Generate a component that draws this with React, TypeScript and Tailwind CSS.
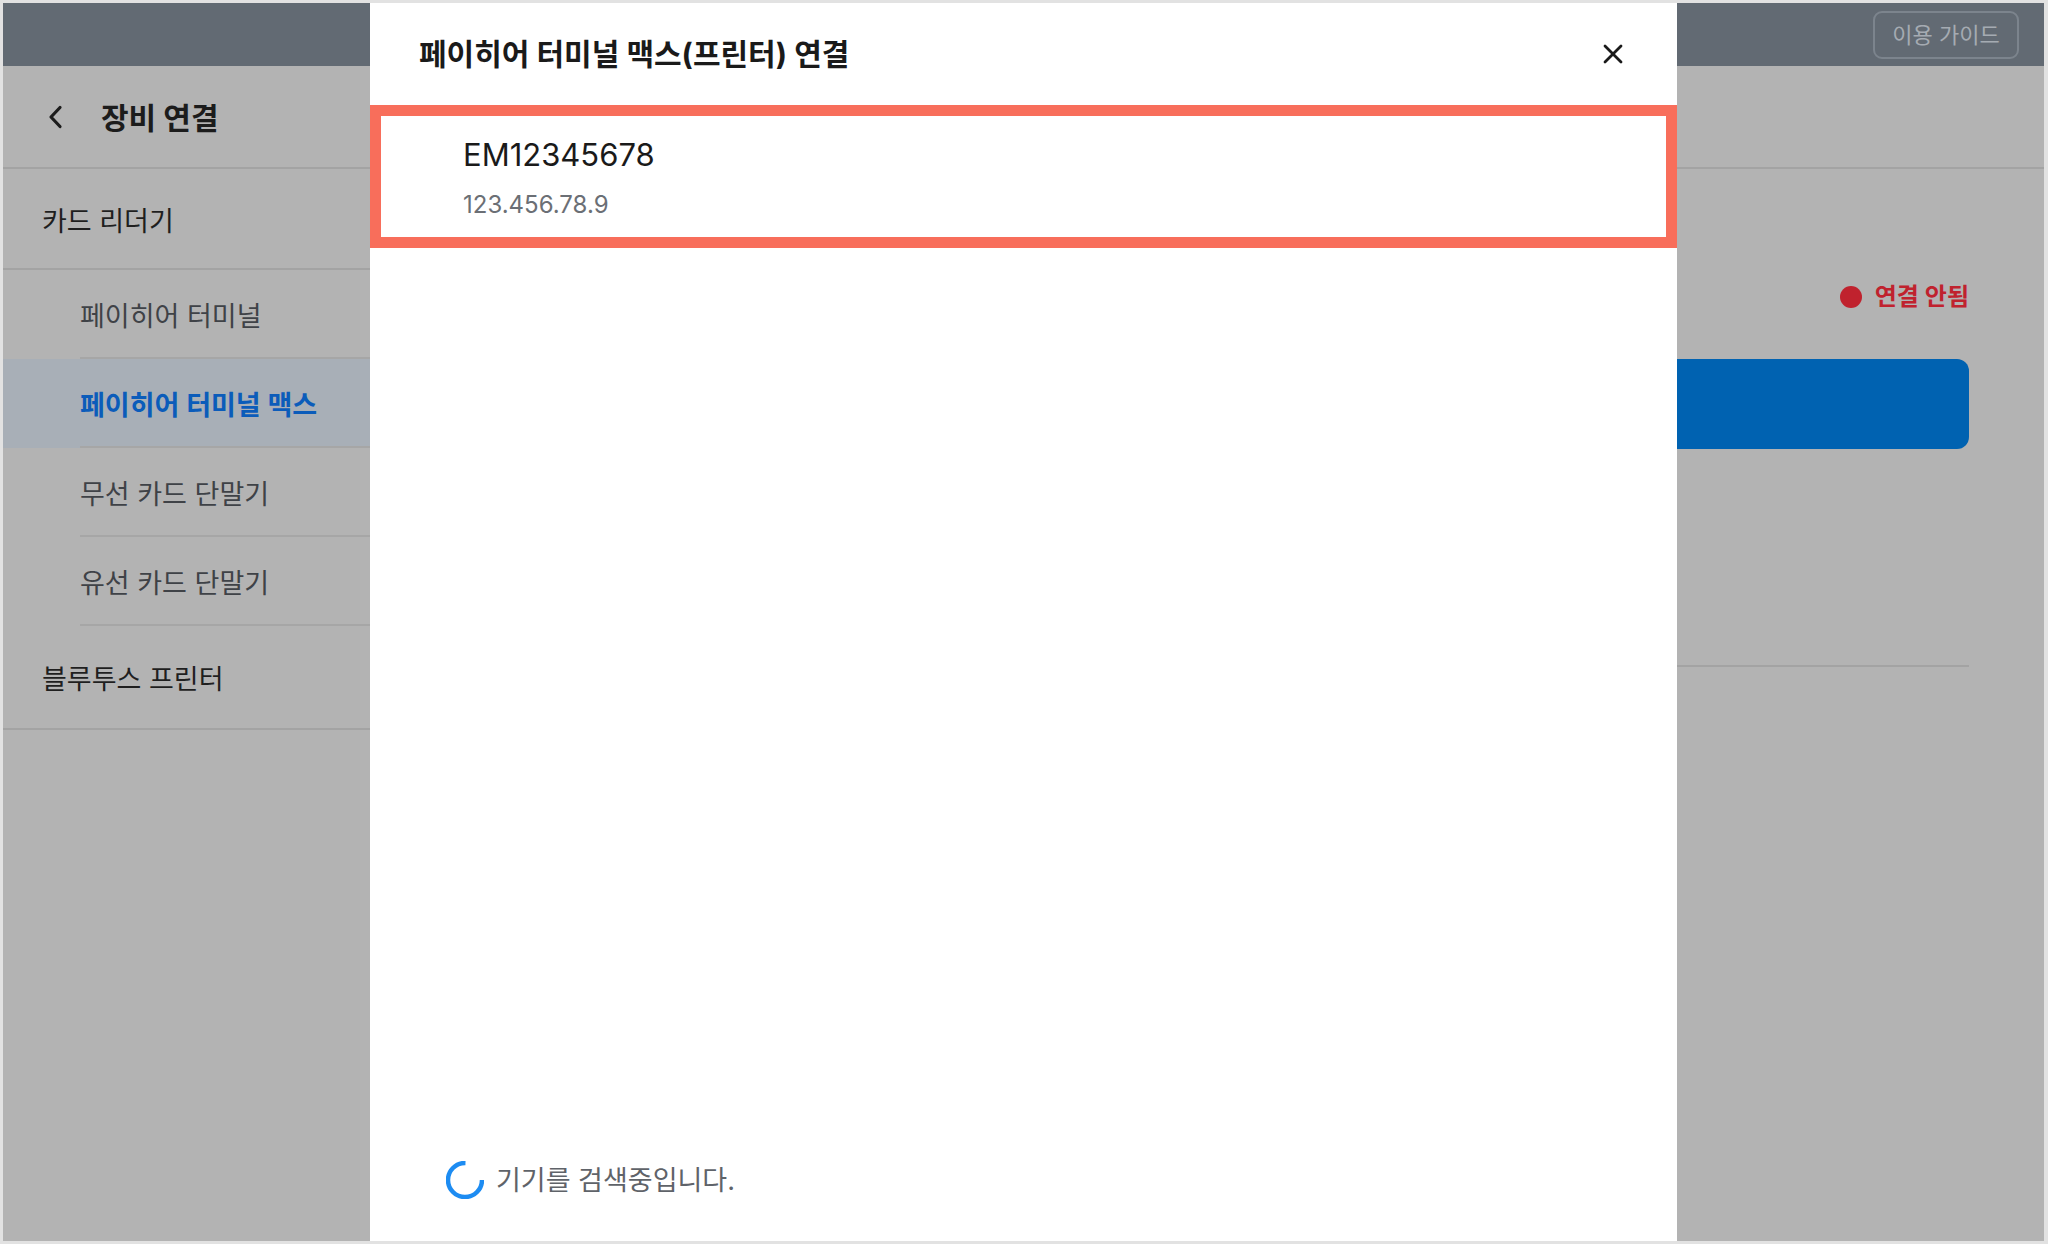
import React from "react";

const KR = { fontFamily: 'Inter, "Noto Sans CJK KR", sans-serif' };

function SubItem({ label, active = false }: { label: string; active?: boolean }) {
  return (
    <div className={active ? "h-[89px] bg-[#a8afb7]" : "h-[89px]"}>
      <div className="ml-[77px] h-full flex items-center pt-[5px] border-b-2 border-[#a6a6a6]">
        <span
          className={
            active
              ? "text-[27px] font-semibold text-[#0b5cba] leading-none"
              : "text-[27px] text-[#3f4247] leading-none"
          }
        >
          {label}
        </span>
      </div>
    </div>
  );
}

export default function App() {
  return (
    <div
      className="w-[2048px] h-[1244px] bg-[#e2e2e2] pt-[3px] pl-[3px] pr-[4px] pb-[3px] overflow-hidden"
      style={KR}
    >
      <div className="relative w-full h-full bg-[#b3b3b3] flex flex-col overflow-hidden">
        {/* top header */}
        <div className="h-[63px] shrink-0 bg-[#626a73] flex items-center justify-end pr-[25px]">
          <div className="w-[146px] h-[48px] rounded-[9px] border-2 border-[#7c848d] flex items-center justify-center text-[22px] text-[#a5abb2] leading-none">
            이용 가이드
          </div>
        </div>

        {/* title row */}
        <div className="h-[103px] shrink-0 border-b-2 border-[#a3a3a3] flex items-center">
          <svg
            width="16"
            height="24"
            viewBox="0 0 16 24"
            className="ml-[45px]"
            fill="none"
            stroke="#1c1c1c"
            strokeWidth="3.2"
            strokeLinecap="round"
            strokeLinejoin="round"
          >
            <polyline points="12,2.5 3,12 12,21.5" />
          </svg>
          <span className="ml-[37px] pt-[2px] text-[30px] font-bold text-[#1c1c1c] leading-none">장비 연결</span>
        </div>

        {/* body */}
        <div className="flex flex-1 min-h-0">
          {/* sidebar */}
          <div className="w-[367px] shrink-0 flex flex-col">
            <div className="h-[101px] border-b-2 border-[#a3a3a3] flex items-center pt-[5px] pl-[39px]">
              <span className="text-[27px] text-[#1f1f1f] leading-none">카드 리더기</span>
            </div>
            <SubItem label="페이히어 터미널" />
            <SubItem label="페이히어 터미널 맥스" active />
            <SubItem label="무선 카드 단말기" />
            <SubItem label="유선 카드 단말기" />
            <div className="h-[104px] border-b-2 border-[#a3a3a3] flex items-center pt-[5px] pl-[39px]">
              <span className="text-[27px] text-[#1f1f1f] leading-none">블루투스 프린터</span>
            </div>
          </div>

          {/* main */}
          <div className="flex-1 flex flex-col px-[75px]">
            <div className="mt-[112px] h-[32px] flex items-center justify-end gap-[13px]">
              <span className="w-[22px] h-[22px] rounded-full bg-[#c0222e]" />
              <span className="text-[24px] font-semibold text-[#c0222e] leading-none">연결 안됨</span>
            </div>
            <div className="mt-[46px] h-[90px] rounded-[12px] bg-[#0062b1]" />
            <div className="mt-[216px] border-t-2 border-[#a3a3a3]" />
          </div>
        </div>

        {/* modal */}
        <div className="absolute top-0 bottom-0 left-[367px] w-[1307px] bg-white flex flex-col">
          <div className="h-[102px] shrink-0 flex items-center justify-between">
            <span className="pl-[49px] text-[30px] font-bold text-[#1a1a1a] leading-none">
              페이히어 터미널 맥스(프린터) 연결
            </span>
            <svg width="20" height="20" viewBox="0 0 20 20" className="mr-[54px]" stroke="#1a1a1a" strokeWidth="2.8" strokeLinecap="round">
              <line x1="2" y1="2" x2="18" y2="18" />
              <line x1="18" y1="2" x2="2" y2="18" />
            </svg>
          </div>

          {/* device item with highlight */}
          <div className="h-[143px] shrink-0 border-[11px] border-[#f86e5b] bg-white pl-[82px] pt-[21px]">
            <div className="text-[31px] leading-[36px] text-[#1a1a1a]">EM12345678</div>
            <div className="mt-[18px] text-[24px] leading-[28px] text-[#6b6f75]">123.456.78.9</div>
          </div>

          <div className="flex-1" />

          <div className="flex items-center pl-[76px] pb-[42px]">
            <svg width="38" height="38" viewBox="0 0 38 38" fill="none">
              <circle
                cx="19"
                cy="19"
                r="17"
                stroke="#1d8cf2"
                strokeWidth="4.5"
                strokeDasharray="80.1 200"
              />
            </svg>
            <span className="ml-[12px] text-[27px] text-[#5f6369] leading-none">기기를 검색중입니다.</span>
          </div>
        </div>
      </div>
    </div>
  );
}
